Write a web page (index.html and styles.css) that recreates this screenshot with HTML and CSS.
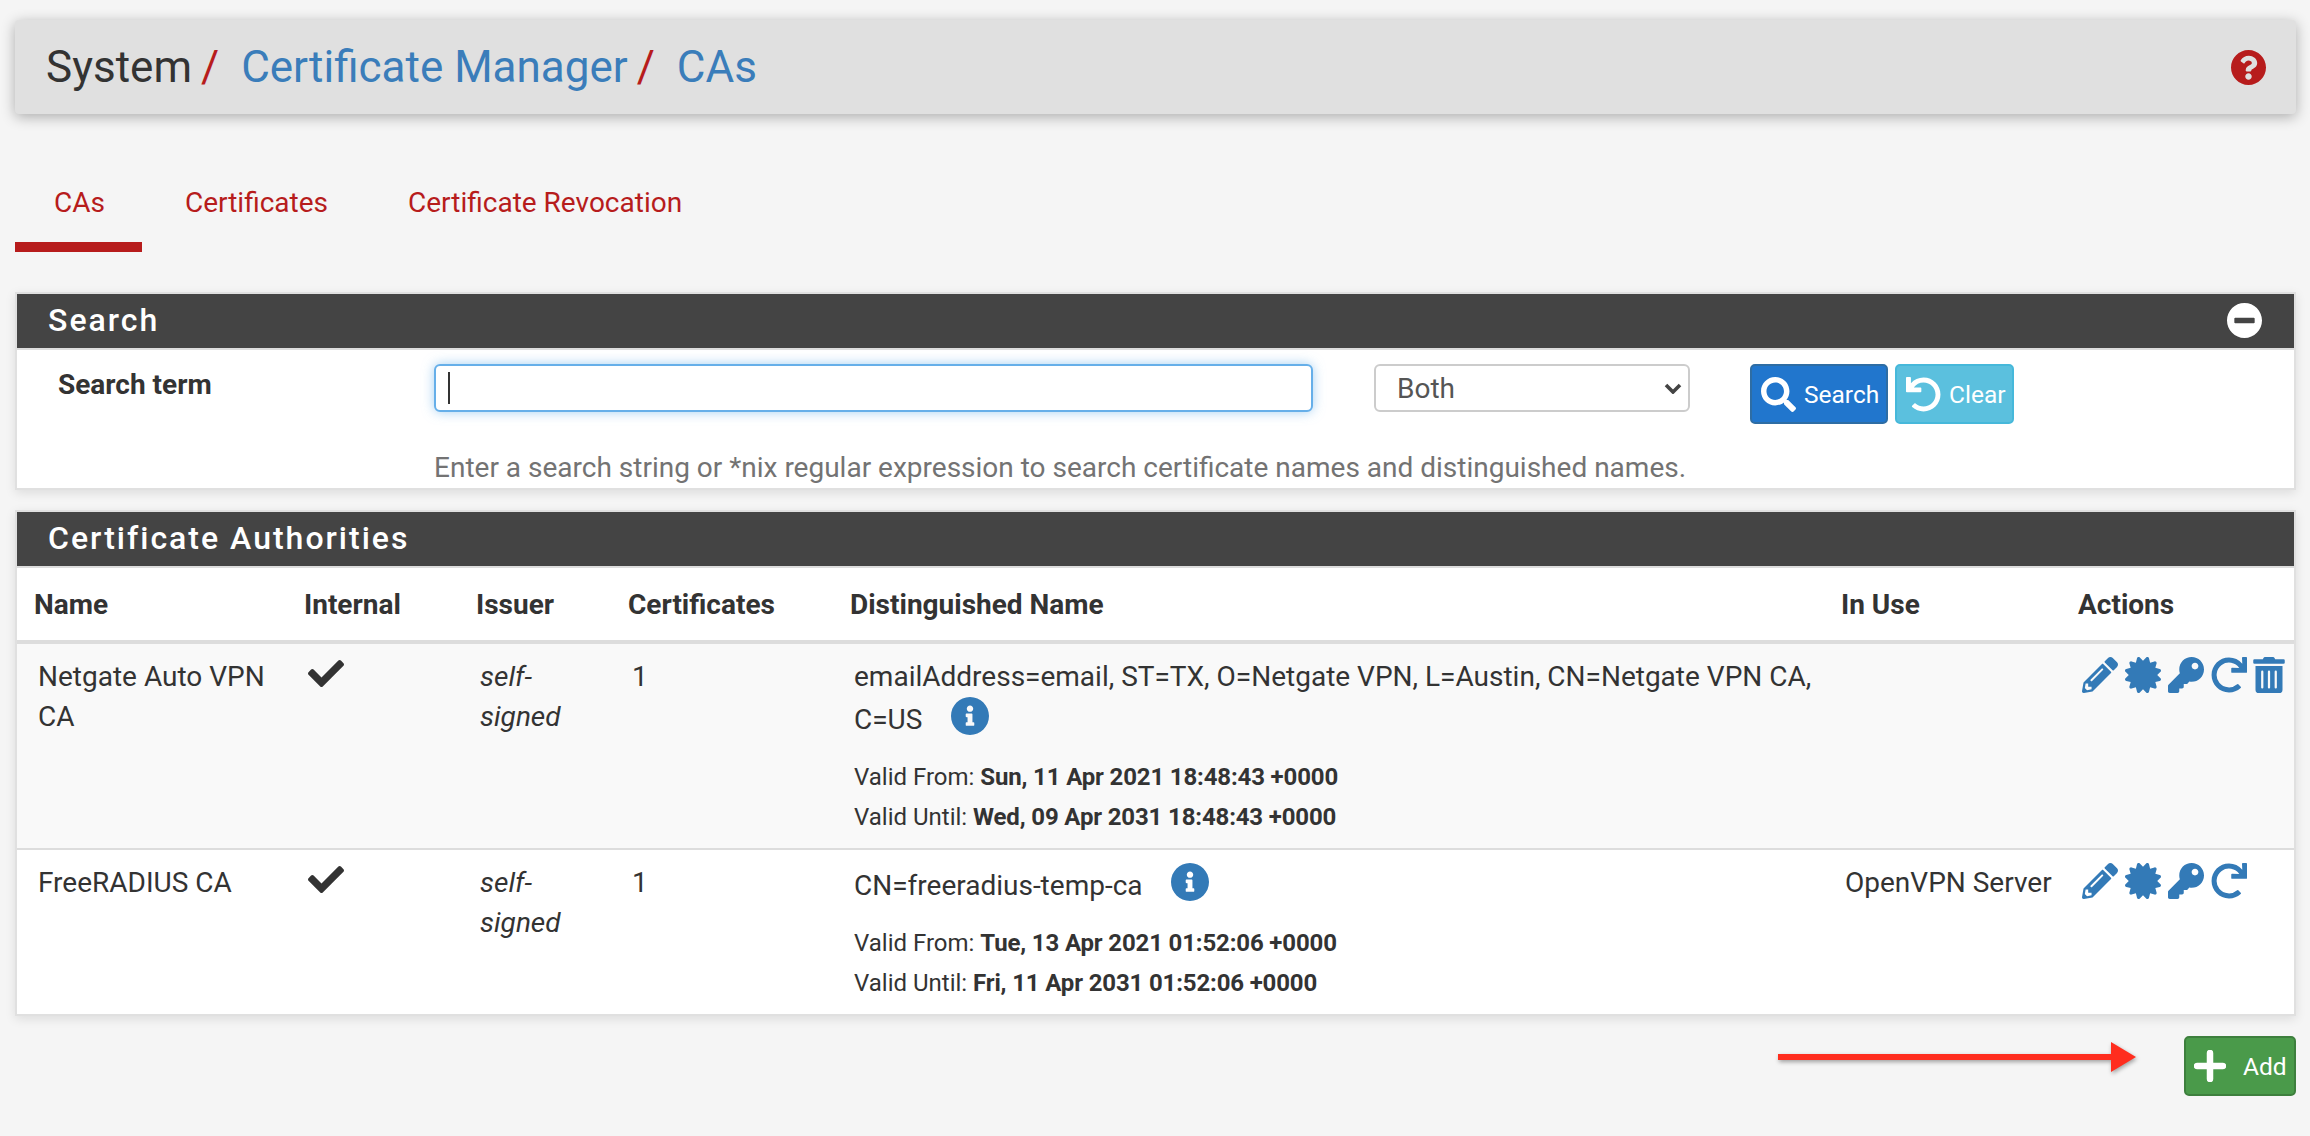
FILE: index.html
```html
<!DOCTYPE html>
<html lang="en">
<head>
    <meta charset="UTF-8">
    <title>System / Certificate Manager / CAs</title>
    <link rel="stylesheet" href="styles.css">
</head>
<body>
<svg class="sprite" xmlns="http://www.w3.org/2000/svg">
    <symbol id="i-question" viewBox="8 8 496 496"><path d="M504 256c0 136.997-111.043 248-248 248S8 392.997 8 256C8 119.083 119.043 8 256 8s248 111.083 248 248zM262.655 90c-54.497 0-89.255 22.957-116.549 63.758-3.536 5.286-2.353 12.415 2.715 16.258l34.699 26.31c5.205 3.947 12.621 3.008 16.665-2.122 17.864-22.658 30.113-35.797 57.303-35.797 20.429 0 45.698 13.148 45.698 32.958 0 14.976-12.363 22.667-32.534 33.976C247.128 238.528 216 254.941 216 296v4c0 6.627 5.373 12 12 12h56c6.627 0 12-5.373 12-12v-1.333c0-28.462 83.186-29.647 83.186-106.667 0-58.002-60.165-102-116.531-102zM256 338c-25.365 0-46 20.635-46 46 0 25.364 20.635 46 46 46s46-20.636 46-46c0-25.365-20.635-46-46-46z"/></symbol>
    <symbol id="i-minus" viewBox="8 8 496 496"><path d="M256 8C119 8 8 119 8 256s111 248 248 248 248-111 248-248S393 8 256 8zM124 296c-6.6 0-12-5.4-12-12v-56c0-6.6 5.4-12 12-12h264c6.6 0 12 5.4 12 12v56c0 6.6-5.4 12-12 12H124z"/></symbol>
    <symbol id="i-search" viewBox="0 0 512 512"><path d="M505 442.7L405.3 343c-4.5-4.5-10.6-7-17-7H372c27.6-35.3 44-79.7 44-128C416 93.1 322.9 0 208 0S0 93.1 0 208s93.1 208 208 208c48.3 0 92.7-16.4 128-44v16.3c0 6.4 2.5 12.5 7 17l99.7 99.7c9.4 9.4 24.6 9.4 33.9 0l28.3-28.3c9.4-9.4 9.4-24.6.1-34zM208 336c-70.7 0-128-57.2-128-128 0-70.7 57.2-128 128-128 70.7 0 128 57.2 128 128 0 70.7-57.2 128-128 128z"/></symbol>
    <symbol id="i-undo" viewBox="0 0 512 512"><path d="M212.333 224.333H12c-6.627 0-12-5.373-12-12V12C0 5.373 5.373 0 12 0h48c6.627 0 12 5.373 12 12v78.112C117.773 39.279 184.26 7.47 258.175 8.007c136.906.994 246.448 111.623 246.157 248.532C504.041 393.258 393.12 504 256.333 504c-64.089 0-122.496-24.313-166.51-64.215-5.099-4.622-5.334-12.554-.467-17.42l33.967-33.967c4.474-4.474 11.662-4.717 16.401-.525C170.76 415.336 211.58 432 256.333 432c97.268 0 176-78.716 176-176 0-97.267-78.716-176-176-176-58.496 0-110.28 28.476-142.274 72.333h98.274c6.627 0 12 5.373 12 12v48c0 6.627-5.373 12-12 12z"/></symbol>
    <symbol id="i-check" viewBox="0 64 512 384"><path d="M173.898 439.404l-166.4-166.4c-9.997-9.997-9.997-26.206 0-36.204l36.203-36.204c9.997-9.998 26.207-9.998 36.204 0L192 312.69 432.095 72.596c9.997-9.997 26.207-9.997 36.204 0l36.203 36.204c9.997 9.997 9.997 26.206 0 36.204l-294.4 294.401c-9.998 9.997-26.207 9.997-36.204-.001z"/></symbol>
    <symbol id="i-info" viewBox="8 8 496 496"><path d="M256 8C119.043 8 8 119.083 8 256c0 136.997 111.043 248 248 248s248-111.003 248-248C504 119.083 392.957 8 256 8zm0 110c23.196 0 42 18.804 42 42s-18.804 42-42 42-42-18.804-42-42 18.804-42 42-42zm56 254c0 6.627-5.373 12-12 12h-88c-6.627 0-12-5.373-12-12v-24c0-6.627 5.373-12 12-12h12v-64h-12c-6.627 0-12-5.373-12-12v-24c0-6.627 5.373-12 12-12h64c6.627 0 12 5.373 12 12v100h12c6.627 0 12 5.373 12 12v24z"/></symbol>
    <symbol id="i-pencil" viewBox="0 0 512 512"><path d="M497.9 142.1l-46.1 46.1c-4.7 4.7-12.3 4.7-17 0l-111-111c-4.7-4.7-4.7-12.3 0-17l46.1-46.1c18.7-18.7 49.1-18.7 67.9 0l60.1 60.1c18.8 18.7 18.8 49.1 0 67.9zM284.2 99.8L21.6 362.4.4 483.9c-2.9 16.4 11.4 30.6 27.8 27.8l121.5-21.3 262.6-262.6c4.7-4.7 4.7-12.3 0-17l-111-111c-4.8-4.7-12.4-4.7-17.1 0zM124.1 339.9c-5.5-5.5-5.5-14.3 0-19.8l154-154c5.5-5.5 14.3-5.5 19.8 0s5.5 14.3 0 19.8l-154 154c-5.5 5.5-14.3 5.5-19.8 0zM88 424h48v36.3l-64.5 11.3-31.1-31.1L51.7 376H88v48z"/></symbol>
    <symbol id="i-cert" viewBox="0 0 512 512"><path d="M458.622 255.92l45.985-45.005c13.708-12.977 7.316-36.039-10.664-40.339l-62.65-15.99 17.661-62.015c4.991-17.838-11.829-34.663-29.661-29.671l-61.994 17.667-15.984-62.671C337.085.197 313.765-6.276 300.99 7.228L256 53.57 211.011 7.229c-12.63-13.351-36.047-7.234-40.325 10.668l-15.984 62.671-61.995-17.667C74.87 57.907 58.056 74.738 63.046 92.572l17.661 62.015-62.65 15.99C.069 174.878-6.31 197.944 7.392 210.915l45.985 45.005-45.985 45.004c-13.708 12.977-7.316 36.039 10.664 40.339l62.65 15.99-17.661 62.015c-4.991 17.838 11.829 34.663 29.661 29.671l61.994-17.667 15.984 62.671c4.439 18.575 27.696 24.018 40.325 10.668L256 458.61l44.989 46.001c12.5 13.488 35.987 7.486 40.325-10.668l15.984-62.671 61.994 17.667c17.836 4.994 34.651-11.837 29.661-29.671l-17.661-62.015 62.65-15.99c17.987-4.302 24.366-27.367 10.664-40.339l-45.984-45.004z"/></symbol>
    <symbol id="i-key" viewBox="0 0 512 512"><path d="M512 176.001C512 273.203 433.202 352 336 352c-11.22 0-22.19-1.062-32.827-3.069l-24.012 27.014A23.999 23.999 0 0 1 261.223 384H224v40c0 13.255-10.745 24-24 24h-40v40c0 13.255-10.745 24-24 24H24c-13.255 0-24-10.745-24-24v-78.059c0-6.365 2.529-12.47 7.029-16.971l161.802-161.802C163.108 213.814 160 195.271 160 176 160 78.798 238.797.001 335.999 0 433.488-.001 512 78.511 512 176.001zM336 128c0 26.51 21.49 48 48 48s48-21.49 48-48-21.49-48-48-48-48 21.49-48 48z"/></symbol>
    <symbol id="i-redo" viewBox="0 0 512 512"><path d="M500.33 0h-47.41a12 12 0 0 0-12 12.57l4 82.76A247.42 247.42 0 0 0 256 8C119.34 8 7.9 119.53 8 256.19 8.1 393.07 119.1 504 256 504a247.1 247.1 0 0 0 166.18-63.91 12 12 0 0 0 .48-17.43l-34-34a12 12 0 0 0-16.38-.55A176 176 0 1 1 402.1 157.8l-101.53-4.87a12 12 0 0 0-12.57 12v47.41a12 12 0 0 0 12 12h200.33a12 12 0 0 0 12-12V12a12 12 0 0 0-12-12z"/></symbol>
    <symbol id="i-trash" viewBox="0 0 448 512"><path d="M32 464a48 48 0 0 0 48 48h288a48 48 0 0 0 48-48V128H32zm272-256a16 16 0 0 1 32 0v224a16 16 0 0 1-32 0zm-96 0a16 16 0 0 1 32 0v224a16 16 0 0 1-32 0zm-96 0a16 16 0 0 1 32 0v224a16 16 0 0 1-32 0zM432 32H312l-9.4-18.7A24 24 0 0 0 281.1 0H166.8a23.72 23.72 0 0 0-21.4 13.3L136 32H16A16 16 0 0 0 0 48v32a16 16 0 0 0 16 16h416a16 16 0 0 0 16-16V48a16 16 0 0 0-16-16z"/></symbol>
</svg>

<header class="page-header">
    <h1 class="breadcrumb">
        <span>System</span><span class="crumb-sep">/</span><a href="#">Certificate Manager</a><span class="crumb-sep">/</span><a href="#">CAs</a>
    </h1>
    <svg class="help-icon"><use href="#i-question"/></svg>
</header>

<nav class="tabs">
    <a class="tab active" href="#">CAs</a>
    <a class="tab" href="#">Certificates</a>
    <a class="tab" href="#">Certificate Revocation</a>
</nav>

<section class="panel">
    <div class="panel-heading">
        <h2>Search</h2>
        <svg class="collapse-icon"><use href="#i-minus"/></svg>
    </div>
    <div class="search-body">
        <div class="search-row">
            <label class="search-label" for="searchTerm">Search term</label>
            <div class="search-input">
                <input type="text" id="searchTerm">
                <span class="caret"></span>
            </div>
            <div class="search-select">
                <select id="searchField">
                    <option>Both</option>
                    <option>Name</option>
                    <option>Distinguished Name</option>
                </select>
                <svg class="select-arrow" viewBox="0 0 18 12"><path d="M2 3l7 7 7-7" fill="none" stroke="#444" stroke-width="3.6"/></svg>
            </div>
            <div class="search-buttons">
                <button type="button" class="btn btn-search"><svg class="btn-icon"><use href="#i-search"/></svg>Search</button>
                <button type="button" class="btn btn-clear"><svg class="btn-icon"><use href="#i-undo"/></svg>Clear</button>
            </div>
        </div>
        <p class="search-help">Enter a search string or *nix regular expression to search certificate names and distinguished names.</p>
    </div>
</section>

<section class="panel panel-cas">
    <div class="panel-heading">
        <h2>Certificate Authorities</h2>
    </div>
    <table class="ca-table">
        <colgroup>
            <col class="col-name">
            <col class="col-internal">
            <col class="col-issuer">
            <col class="col-certs">
            <col class="col-dn">
            <col class="col-use">
            <col class="col-actions">
        </colgroup>
        <thead>
            <tr>
                <th>Name</th>
                <th>Internal</th>
                <th>Issuer</th>
                <th>Certificates</th>
                <th>Distinguished Name</th>
                <th>In Use</th>
                <th>Actions</th>
            </tr>
        </thead>
        <tbody>
            <tr>
                <td>Netgate Auto VPN CA</td>
                <td><svg class="check-icon"><use href="#i-check"/></svg></td>
                <td><i>self-signed</i></td>
                <td>1</td>
                <td class="dn-cell">
                    emailAddress=email, ST=TX, O=Netgate VPN, L=Austin, CN=Netgate VPN CA, C=US <svg class="info-icon"><use href="#i-info"/></svg>
                    <div class="validity">
                        <div>Valid From: <b>Sun, 11 Apr 2021 18:48:43 +0000</b></div>
                        <div>Valid Until: <b>Wed, 09 Apr 2031 18:48:43 +0000</b></div>
                    </div>
                </td>
                <td class="use-cell"></td>
                <td class="actions-cell">
                    <div class="actions">
                        <svg class="action-icon"><use href="#i-pencil"/></svg>
                        <svg class="action-icon"><use href="#i-cert"/></svg>
                        <svg class="action-icon"><use href="#i-key"/></svg>
                        <svg class="action-icon"><use href="#i-redo"/></svg>
                        <svg class="action-icon trash"><use href="#i-trash"/></svg>
                    </div>
                </td>
            </tr>
            <tr>
                <td>FreeRADIUS CA</td>
                <td><svg class="check-icon"><use href="#i-check"/></svg></td>
                <td><i>self-signed</i></td>
                <td>1</td>
                <td class="dn-cell">
                    CN=freeradius-temp-ca <svg class="info-icon"><use href="#i-info"/></svg>
                    <div class="validity">
                        <div>Valid From: <b>Tue, 13 Apr 2021 01:52:06 +0000</b></div>
                        <div>Valid Until: <b>Fri, 11 Apr 2031 01:52:06 +0000</b></div>
                    </div>
                </td>
                <td class="use-cell">OpenVPN Server</td>
                <td class="actions-cell">
                    <div class="actions">
                        <svg class="action-icon"><use href="#i-pencil"/></svg>
                        <svg class="action-icon"><use href="#i-cert"/></svg>
                        <svg class="action-icon"><use href="#i-key"/></svg>
                        <svg class="action-icon"><use href="#i-redo"/></svg>
                    </div>
                </td>
            </tr>
        </tbody>
    </table>
</section>

<div class="page-actions">
    <button type="button" class="btn btn-add">
        <svg class="plus-icon" viewBox="0 0 32 32"><path d="M16 3v26M3 16h26" stroke="#fff" stroke-width="6.5" stroke-linecap="round"/></svg>
        Add
    </button>
</div>

<!-- red annotation arrow drawn over the screenshot -->
<svg class="arrow" viewBox="0 0 360 30">
    <path d="M0 12h333V0l25 15-25 15V18H0z" fill="#ff2d1e"/>
</svg>
</body>
</html>
```

FILE: styles.css
```css
* {
    box-sizing: border-box;
}

body {
    margin: 0;
    padding: 20px 14px 0 15px;
    background: #f5f5f5;
    font-family: Roboto, "Liberation Sans", sans-serif;
    font-size: 28px;
    color: #333;
}

a {
    text-decoration: none;
}

.sprite {
    display: none;
}

.page-header {
    display: flex;
    justify-content: space-between;
    align-items: center;
    height: 94px;
    padding: 0 30px 0 31px;
    background: #e0e0e0;
    border-radius: 4px;
    box-shadow: 0 3px 14px rgba(0, 0, 0, .3);
}

.breadcrumb {
    margin: 0;
    font-size: 44px;
    font-weight: 400;
    color: #333;
}

.breadcrumb a {
    color: #3a7dba;
}

.crumb-sep {
    margin: 0 22px 0 9px;
    color: #b71c1c;
}

.help-icon {
    width: 35px;
    height: 35px;
    fill: #b71c1c;
}

.tabs {
    display: flex;
    gap: 4px;
    margin: 71px 0 40px;
}

.tab {
    padding: 0 37px 21px 39px;
    line-height: 36px;
    color: #b71c1c;
    border-bottom: 10px solid transparent;
}

.tab.active {
    border-bottom-color: #b71c1c;
}

.panel {
    background: #fff;
    border: 2px solid #e0e0e0;
    box-shadow: 0 3px 10px rgba(0, 0, 0, .1);
}

.panel-cas {
    margin-top: 20px;
}

.panel-heading {
    display: flex;
    justify-content: space-between;
    align-items: center;
    height: 56px;
    padding: 0 32px 2px 31px;
    background: #444;
    border-bottom: 2px solid #ddd;
}

.panel-heading h2 {
    margin: 0;
    font-size: 32px;
    font-weight: 500;
    letter-spacing: 2px;
    color: #fff;
}

.collapse-icon {
    width: 35px;
    height: 35px;
    fill: #fff;
}

.search-body {
    padding: 14px 0 0 41px;
    height: 138px;
}

.search-row {
    display: flex;
    align-items: flex-start;
}

.search-label {
    width: 376px;
    font-weight: 700;
    line-height: 41px;
}

.search-input {
    position: relative;
    width: 879px;
}

.search-input input {
    display: block;
    width: 100%;
    height: 48px;
    border: 2px solid #66afe9;
    border-radius: 6px;
    outline: none;
    box-shadow: 0 0 12px rgba(102, 175, 233, .6);
}

.caret {
    position: absolute;
    left: 14px;
    top: 8px;
    width: 2px;
    height: 32px;
    background: #333;
}

.search-select {
    position: relative;
    width: 316px;
    margin-left: 61px;
}

.search-select select {
    display: block;
    width: 100%;
    height: 48px;
    padding-left: 21px;
    background: #fff;
    border: 2px solid #ccc;
    border-radius: 6px;
    appearance: none;
    font: inherit;
    color: #555;
}

.select-arrow {
    position: absolute;
    right: 8px;
    top: 18px;
    width: 18px;
    height: 12px;
}

.search-buttons {
    display: flex;
    gap: 7px;
    margin-left: 60px;
}

.btn {
    display: flex;
    align-items: center;
    height: 60px;
    padding: 0 7px 0 9px;
    border: 2px solid;
    border-radius: 5px;
    font-family: inherit;
    font-size: 24.5px;
    color: #fff;
}

.btn-icon {
    flex: none;
    width: 35px;
    height: 35px;
    margin-right: 8px;
    fill: #fff;
}

.btn-search {
    width: 138px;
    background: #2176cd;
    border-color: #2e6da4;
}

.btn-clear {
    width: 119px;
    background: #5bc0de;
    border-color: #46b8da;
}

.search-help {
    margin: 27px 0 0 376px;
    line-height: 34px;
    color: #737373;
}

.ca-table {
    width: 100%;
    table-layout: fixed;
    border-collapse: separate;
    border-spacing: 0;
}

.col-name { width: 270px; }
.col-internal { width: 172px; }
.col-issuer { width: 152px; }
.col-certs { width: 222px; }
.col-dn { width: 991px; }
.col-use { width: 237px; }
.col-actions { width: 233px; }

.ca-table th {
    height: 76px;
    padding: 0 17px;
    border-bottom: 4px solid #ddd;
    text-align: left;
    font-weight: 700;
}

.ca-table td {
    padding: 13px 21px 11px;
    line-height: 40px;
    vertical-align: top;
}

.ca-table tbody tr:first-child td {
    background: #f9f9f9;
}

.ca-table tbody tr + tr td {
    border-top: 2px solid #ddd;
}

.ca-table td.dn-cell,
.ca-table td.use-cell {
    padding-right: 8px;
}

.ca-table td.actions-cell {
    padding-right: 0;
}

.check-icon {
    width: 36px;
    height: 27px;
    vertical-align: -1px;
    fill: #333;
}

.info-icon {
    width: 38px;
    height: 38px;
    margin-left: 22px;
    vertical-align: -6px;
    fill: #337ab7;
}

.validity {
    margin-top: 17px;
    font-size: 24px;
}

.validity b {
    letter-spacing: -.15px;
}

.actions {
    display: flex;
    gap: 7px;
}

.action-icon {
    flex: none;
    width: 36px;
    height: 36px;
    fill: #337ab7;
}

.action-icon.trash {
    width: 32px;
    margin-left: -1px;
}

.page-actions {
    display: flex;
    justify-content: flex-end;
    margin-top: 20px;
}

.btn-add {
    width: 112px;
    padding: 0 8px;
    background: #4a9a4a;
    border-color: #3d7f3d;
}

.plus-icon {
    flex: none;
    width: 32px;
    height: 32px;
    margin-right: 17px;
}

.arrow {
    position: absolute;
    left: 1778px;
    top: 1042px;
    width: 360px;
    height: 30px;
    filter: drop-shadow(1px 2px 2px rgba(0, 0, 0, .35));
}
```
